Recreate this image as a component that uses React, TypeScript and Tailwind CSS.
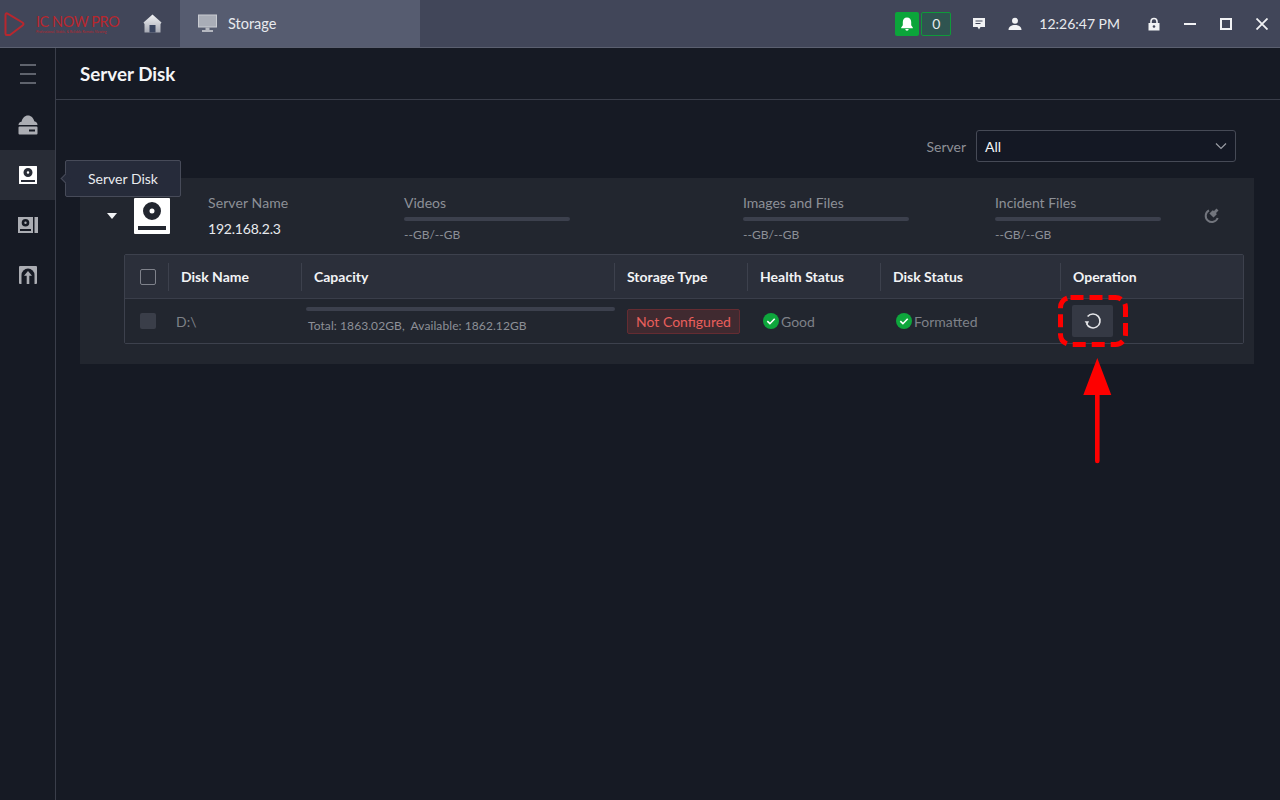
const columns = [
  { label: 'Disk Name', width: 'w-[133px]' },
  { label: 'Capacity', width: 'w-[313px]' },
  { label: 'Storage Type', width: 'w-[133px]' },
  { label: 'Health Status', width: 'w-[133px]' },
  { label: 'Disk Status', width: 'w-[180px]' },
  { label: 'Operation', width: 'flex-1' },
];

const usageBlocks = [
  { label: 'Videos', width: 'w-[339px]' },
  { label: 'Images and Files', width: 'w-[252px]' },
  { label: 'Incident Files', width: 'w-[200px]' },
];

const DiskIcon = ({ className }: { className: string }) => (
  <svg viewBox="0 0 36 36" className={className}>
    <path fill="currentColor" fillRule="evenodd" d="M1 0h34a1 1 0 0 1 1 1v34a1 1 0 0 1-1 1H1a1 1 0 0 1-1-1V1a1 1 0 0 1 1-1zM18 4a9 9 0 1 0 0 18 9 9 0 0 0 0-18zm0 6.500a2.500 2.500 0 1 1 0 5 2.500 2.500 0 0 1 0-5zM4 28v4h28v-4z" />
  </svg>
);

const CheckBadge = () => (
  <svg viewBox="0 0 16 16" className="w-4 h-4 shrink-0 mr-[2px]">
    <circle cx="8" cy="8" r="8" fill="#0ea63c" />
    <path d="M4.300 8.200l2.600 2.500 4.800-4.900" fill="none" stroke="#fff" strokeWidth="1.600" />
  </svg>
);

const TopBar = () => (
  <div className="h-[48px] bg-[#414659] border-b border-[#5b6070] flex items-center shrink-0">
    <div className="w-[135px] flex items-center pl-[3px]">
      <svg viewBox="0 0 22 26" className="w-[22px] h-[26px]">
        <path d="M2.500 4 Q2.500 1.500 5 2.800 L19.500 11.500 Q21.500 13 19.500 14.500 L7 24 H3.500 Q2.500 24 2.500 22.500 Z" fill="none" stroke="#b8272e" strokeWidth="2" strokeLinejoin="round" />
      </svg>
      <div className="ml-[11px] flex flex-col">
        <span className="text-[14.500px] leading-[15px] text-[#b8272e] whitespace-nowrap tracking-[-0.45px]">IC NOW PRO</span>
        <span className="text-[3.400px] leading-[4px] mt-[1px] text-[#b8272e] whitespace-nowrap">Professional, Stable, & Reliable Remote Viewing</span>
      </div>
    </div>
    <div className="w-[34px] flex justify-center">
      <svg viewBox="0 0 19 19" className="w-[19px] h-[19px]">
        <defs>
          <linearGradient id="homeFill" x1="0" y1="0" x2="0" y2="1">
            <stop offset="0" stopColor="#f2f3f5" />
            <stop offset="1" stopColor="#a6a9b3" />
          </linearGradient>
        </defs>
        <path d="M9.500 0.500 L18.500 8.500 L17.500 10 V18.500 H1.500 V10 L0.500 8.500 Z" fill="url(#homeFill)" />
        <rect x="6.500" y="11" width="6" height="7.500" fill="#3a4560" />
      </svg>
    </div>
    <div className="w-[240px] h-full ml-[11px] bg-[#565c70] flex items-center pl-[18px]">
      <svg viewBox="0 0 19 19" className="w-[19px] h-[19px]">
        <rect x="0.500" y="1" width="18" height="12" fill="#a9adb7" stroke="#c9ccd2" />
        <rect x="7.500" y="13.500" width="4" height="2.500" fill="#b5b8c0" />
        <rect x="4" y="16" width="11" height="2" fill="#b5b8c0" />
      </svg>
      <span className="ml-[11px] text-[14.500px] text-[#e8eaee]">Storage</span>
    </div>
    <div className="flex-1" />
    <div className="w-[24px] h-[24px] bg-[#0ba53a] rounded-[2px] flex items-center justify-center">
      <svg viewBox="0 0 14 14" className="w-[14px] h-[14px]">
        <path d="M7 0.500c-2.600 0-4.200 2-4.200 4.500v3.200L1.200 10.500v.7h11.600v-.7l-1.600-2.300V5c0-2.500-1.600-4.500-4.200-4.500zM5.300 12.100h3.400a1.700 1.700 0 0 1-3.400 0z" fill="#fff" />
      </svg>
    </div>
    <div className="w-[30px] h-[24px] ml-[2px] bg-[#2f5450] border border-[#0f9a3a] rounded-[2px] flex items-center justify-center text-[14px] text-[#e8eaee]">0</div>
    <svg viewBox="0 0 14 14" className="w-[14px] h-[14px] ml-[21px]">
      <path d="M1 1h12v9H8.500L7 12.500 5.500 10H1z" fill="#f1f2f4" />
      <path d="M3.500 4h7M3.500 6.500h5" stroke="#414659" strokeWidth="1.200" />
    </svg>
    <svg viewBox="0 0 14 14" className="w-[14px] h-[14px] ml-[22px]">
      <circle cx="7" cy="3.800" r="3" fill="#f1f2f4" />
      <path d="M0.500 13c0-3.300 2.800-5 6.500-5s6.500 1.700 6.500 5z" fill="#f1f2f4" />
    </svg>
    <span className="ml-[17px] text-[14px] text-[#e8eaee] whitespace-nowrap">12:26:47 PM</span>
    <svg viewBox="0 0 14 14" className="w-[14px] h-[14px] ml-[27px]">
      <path d="M4 6V4.500a3 3 0 0 1 6 0V6" fill="none" stroke="#f1f2f4" strokeWidth="1.600" />
      <path d="M1.500 6h11v7.500h-11z" fill="#f1f2f4" />
      <circle cx="7" cy="9.500" r="1.300" fill="#414659" />
    </svg>
    <div className="w-[12px] h-[2px] bg-[#f1f2f4] ml-[23px]" />
    <div className="w-[12px] h-[12px] border-2 border-[#f1f2f4] ml-[24px]" />
    <svg viewBox="0 0 12 12" className="w-[12px] h-[12px] ml-[24px] mr-[12px]">
      <path d="M0.500 0.500l11 11M11.500 0.500l-11 11" stroke="#f1f2f4" strokeWidth="1.800" />
    </svg>
  </div>
);

const Sidebar = () => (
  <div className="w-[56px] shrink-0 border-r border-[#3a3e4a] flex flex-col">
    <div className="h-[52px] flex flex-col items-center justify-center gap-[7px]">
      <div className="w-[16px] h-[2px] bg-[#5f636d]" />
      <div className="w-[16px] h-[2px] bg-[#5f636d]" />
      <div className="w-[16px] h-[2px] bg-[#5f636d]" />
    </div>
    <div className="h-[50px] flex items-center justify-center">
      <svg viewBox="0 0 20 20" className="w-5 h-5">
        <path d="M0.500 10c0-1.800 1.200-3 3-3.200C4.300 3 6.800 0.500 10 0.500c3 0 5.500 2.300 6.300 5.800 1.900.2 3.200 1.800 3.200 3.700z" fill="#abadb3" />
        <path fillRule="evenodd" d="M1.500 11.500h17a1 1 0 0 1 1 1v6a1 1 0 0 1-1 1h-17a1 1 0 0 1-1-1v-6a1 1 0 0 1 1-1zM11 14.500v2h6v-2z" fill="#abadb3" />
      </svg>
    </div>
    <div className="h-[50px] bg-[#282c36] flex items-center justify-center">
      <DiskIcon className="w-[18px] h-[18px] text-white" />
    </div>
    <div className="h-[50px] flex items-center justify-center">
      <svg viewBox="0 0 20 16" className="w-5 h-4">
        <path fillRule="evenodd" d="M0 0h15v16H0zM7.500 2a3.800 3.800 0 1 0 0 7.600 3.800 3.800 0 0 0 0-7.600zm0 2.600a1.200 1.200 0 1 1 0 2.400 1.200 1.200 0 0 1 0-2.400zM2 12v2h11v-2z" fill="#abadb3" />
        <rect x="16.500" y="0" width="3.500" height="16" fill="#abadb3" />
      </svg>
    </div>
    <div className="h-[50px] flex items-center justify-center">
      <svg viewBox="0 0 18 18" className="w-[18px] h-[18px]">
        <rect width="18" height="18" rx="1" fill="#abadb3" />
        <path d="M2.500 18V9a6.500 6.500 0 0 1 13 0v9z" fill="#161a24" />
        <path d="M9 5l4 4.800h-2.700V18H7.700V9.800H5z" fill="#abadb3" />
      </svg>
    </div>
  </div>
);

const UsageBlock = ({ label, width }: { label: string; width: string }) => (
  <div className={`${width} pt-[4px]`}>
    <div className="text-[14px] leading-[17px] text-[#8d9097]">{label}</div>
    <div className="w-[166px] h-[4px] mt-[6px] rounded-full bg-[#3c404d]" />
    <div className="text-[12px] leading-[14px] mt-[7px] text-[#8d9097]">--GB/--GB</div>
  </div>
);

const DiskTable = () => (
  <div className="ml-[44px] mr-[10px] h-[90px] border border-[#3d414d] rounded-[2px]">
    <div className="h-[44px] bg-[#2b2f3a] border-b border-[#3a3e4a] flex items-center">
      <div className="w-[43px] flex justify-center pl-[2px]">
        <div className="w-[16px] h-[16px] border border-[#7f828b] rounded-[2px]" />
      </div>
      {columns.map((c) => (
        <div key={c.label} className={`${c.width} h-[28px] flex items-center border-l border-[#3d414d] pl-[12px] text-[14px] text-[#f2f3f5] font-bold`}>
          {c.label}
        </div>
      ))}
    </div>
    <div className="h-[44px] bg-[#22262f] flex items-center">
      <div className="w-[43px] flex justify-center pl-[2px]">
        <div className="w-[16px] h-[16px] bg-[#3a3e49] rounded-[2px]" />
      </div>
      <div className="w-[133px] pl-[8px] text-[14px] text-[#7e8188]">D:\</div>
      <div className="w-[313px] pl-[5px] mb-[2px]">
        <div className="w-[309px] h-[4px] rounded-full bg-[#3c404d]" />
        <div className="mt-[8px] pl-[2px] text-[12px] leading-[14px] text-[#8d9097] whitespace-pre tracking-[0.08px]">Total: 1863.02GB,  Available: 1862.12GB</div>
      </div>
      <div className="w-[133px] pl-[13px]">
        <div className="w-[113px] h-[25px] bg-[#402a30] border border-[#652c32] rounded-[2px] flex items-center justify-center text-[14px] text-[#e85f5c]">Not Configured</div>
      </div>
      <div className="w-[133px] pl-[16px] flex items-center text-[14px] text-[#7e8188]">
        <CheckBadge />
        <span>Good</span>
      </div>
      <div className="w-[180px] pl-[16px] flex items-center text-[14px] text-[#7e8188]">
        <CheckBadge />
        <span>Formatted</span>
      </div>
      <div className="flex-1 pl-[12px]">
        <div className="w-[41px] h-[32px] bg-[#353944] rounded-[2px] flex items-center justify-center">
          <svg viewBox="0 0 18 18" className="w-[18px] h-[18px]">
            <path d="M3.600 4.500A7 7 0 1 1 2.500 11.500" fill="none" stroke="#e4e5e8" strokeWidth="1.600" />
            <path d="M0.600 9.200l4.400 0-1.700 3.800z" fill="#e4e5e8" />
          </svg>
        </div>
      </div>
    </div>
  </div>
);

export default function App() {
  return (
    <div className="relative w-[1280px] h-[800px] overflow-hidden bg-[#161a24] flex flex-col font-['Lato',sans-serif]">
      <TopBar />
      <div className="flex flex-1 min-h-0">
        <Sidebar />
        <div className="flex-1 flex flex-col min-w-0">
          <div className="h-[52px] border-b border-[#3a3e4a] pl-[24px] pt-[2px] flex items-center text-[18.800px] font-bold text-[#f4f5f7]">Server Disk</div>
          <div className="h-[30px]" />
          <div className="flex items-center justify-end pr-[44px]">
            <span className="text-[14px] text-[#8d9097] mr-[10px]">Server</span>
            <div className="w-[260px] h-[32px] bg-[#141824] border border-[#464a56] rounded-[3px] flex items-center justify-between pl-[8px] pr-[8px] text-[14px] text-[#f2f3f5]">
              All
              <svg viewBox="0 0 12 12" className="w-3 h-3">
                <path d="M1 3.500l5 5 5-5" fill="none" stroke="#9a9da4" strokeWidth="1.200" />
              </svg>
            </div>
          </div>
          <div className="mt-[16px] ml-[24px] w-[1174px] h-[186px] bg-[#22262f]">
            <div className="h-[76px] flex items-center">
              <svg viewBox="0 0 10 6" className="w-[10px] h-[6px] ml-[27px]">
                <path d="M0 0h10L5 6z" fill="#f2f3f5" />
              </svg>
              <DiskIcon className="w-[36px] h-[36px] text-white ml-[17px]" />
              <div className="w-[196px] ml-[38px] mb-[2px]">
                <div className="text-[14px] leading-[17px] text-[#8d9097] tracking-[0.1px]">Server Name</div>
                <div className="text-[14px] leading-[17px] mt-[9px] text-[#e8eaee] tracking-[-0.2px]">192.168.2.3</div>
              </div>
              {usageBlocks.map((b) => (
                <UsageBlock key={b.label} label={b.label} width={b.width} />
              ))}
              <svg viewBox="0 0 16 16" className="w-4 h-4 ml-[8px]">
                <path d="M6 2.300A6.200 6.200 0 1 0 14.700 10" fill="none" stroke="#72757d" strokeWidth="2" />
                <path d="M13.500 0.500l2 2-2.500 2.500 .8 1.300-3.300 3.300-4.100-4.100 3.300-3.300 1.300 .8z" fill="#72757d" />
              </svg>
            </div>
            <DiskTable />
          </div>
        </div>
      </div>

      {/* tooltip over the sidebar */}
      <div className="absolute left-[65px] top-[160px] w-[116px] h-[37px] bg-[#262b3a] border border-[#474b59] rounded-[2px] flex items-center justify-center text-[14px] text-[#e8eaee]">
        Server Disk
        <div className="absolute left-[-4px] top-[14px] w-[7px] h-[7px] rotate-45 bg-[#262b3a] border-l border-b border-[#474b59]" />
      </div>

      {/* red annotation */}
      <svg className="absolute left-[1050px] top-[285px] w-[90px] h-[190px]" viewBox="0 0 90 190">
        <rect x="10.500" y="12.500" width="65" height="47" rx="10" fill="none" stroke="#fe0000" strokeWidth="5" strokeDasharray="13 6" />
        <path d="M47.300 73L61.300 110H49.600V176a2.300 2.300 0 0 1-4.600 0V110H33.300z" fill="#fe0000" />
      </svg>
    </div>
  );
}
